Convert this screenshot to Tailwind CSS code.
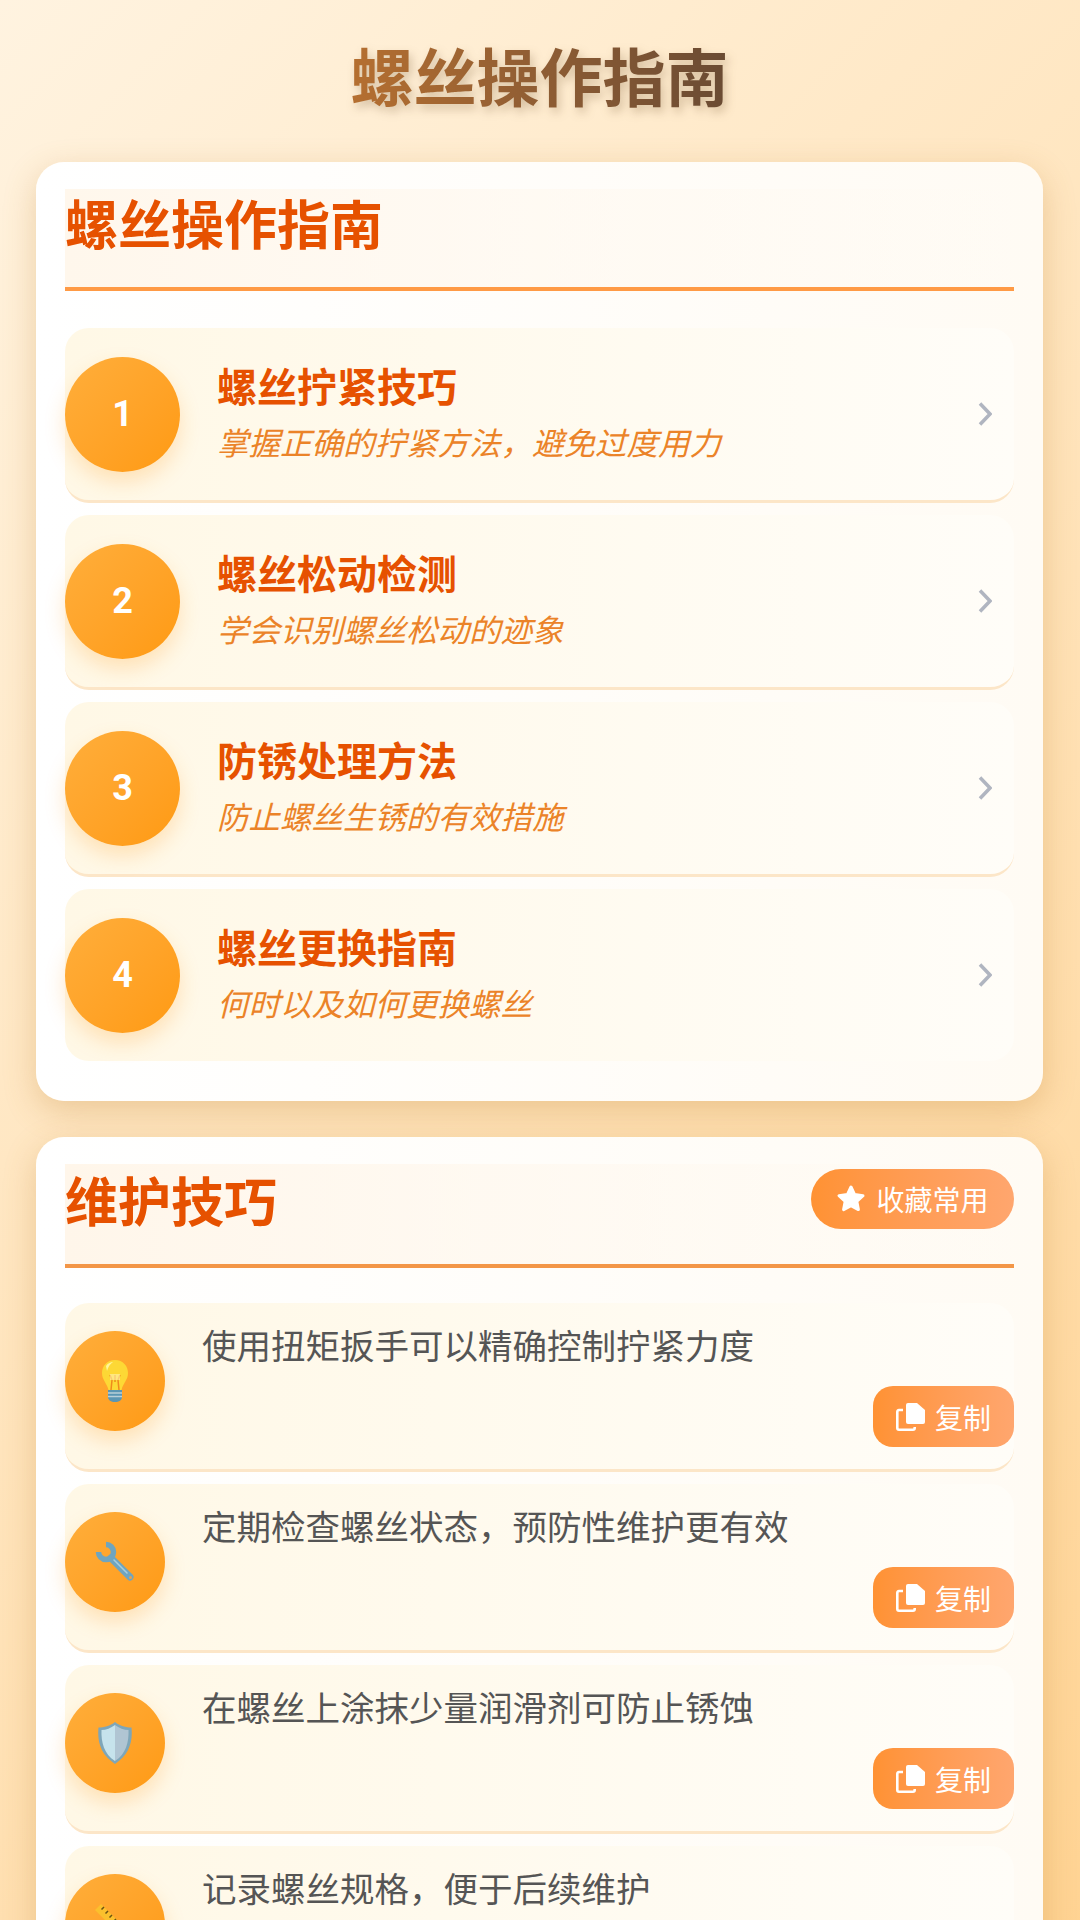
<!DOCTYPE html>
<html lang="zh-CN">
<head>
  <meta charset="UTF-8" />
  <meta name="viewport" content="width=device-width, initial-scale=1" />
  <title>螺丝操作指南</title>
  <script src="https://cdn.jsdelivr.net/npm/@tailwindcss/browser@4"></script>
</head>
<body class="font-['Noto_Sans_CJK_SC','Noto_Sans',sans-serif]">
  <div class="h-[1920px] overflow-hidden">
  <div class="h-[2600px] bg-linear-135 from-[#fff3e0] via-[#ffe0b2] to-[#ffcc80] pr-[37px] pl-[36px]">
    <h1 class="pt-[31px] pb-[45px] text-center text-[63px] leading-[86px] font-bold">
      <span class="bg-linear-to-r from-[#b56f30] to-[#6a4b33] bg-clip-text text-transparent drop-shadow-[3px_5px_5px_rgba(90,60,20,0.25)]">螺丝操作指南</span>
    </h1>

    <!-- 操作指南 -->
    <section class="mb-[36px] rounded-[28px] bg-linear-to-r from-white to-[#fffbf4] px-[29px] pt-[27px] pb-[25px] shadow-[0_10px_32px_rgba(190,130,50,0.3)]">
      <div class="mb-[37px] flex h-[102px] items-start border-b-[4px] border-[#ff9a45] bg-linear-to-r from-[#fff7ec] to-transparent">
        <h2 class="-mt-[3px] text-[53px] leading-[72px] font-bold text-[#e65100]">螺丝操作指南</h2>
      </div>

      <div class="mb-[12px] flex h-[175px] items-center rounded-[24px] border-b-[3px] border-[#fce6c8] bg-linear-to-r from-[#fff8e6] to-[#fffdf8]">
        <div class="flex h-[115px] w-[115px] shrink-0 items-center justify-center rounded-full bg-linear-135 from-[#ffae3a] to-[#ff9a10] font-['Roboto',sans-serif] text-[36px] font-bold text-white shadow-[0_10px_20px_rgba(255,160,40,0.25)]">1</div>
        <div class="ml-[37px] flex-1 pb-[8px]">
          <div class="mb-[5px] text-[40px] leading-[56px] font-bold text-[#e65100]">螺丝拧紧技巧</div>
          <div class="text-[31.5px] leading-[46px] text-[#eb8328] italic">掌握正确的拧紧方法，避免过度用力</div>
        </div>
        <svg class="mr-[22px]" width="14" height="24" viewBox="0 0 14 24" fill="none" stroke="#b0b5c0" stroke-width="3.500"><path d="M2 1.500 12 12 2 22.500" /></svg>
      </div>

      <div class="mb-[12px] flex h-[175px] items-center rounded-[24px] border-b-[3px] border-[#fce6c8] bg-linear-to-r from-[#fff8e6] to-[#fffdf8]">
        <div class="flex h-[115px] w-[115px] shrink-0 items-center justify-center rounded-full bg-linear-135 from-[#ffae3a] to-[#ff9a10] font-['Roboto',sans-serif] text-[36px] font-bold text-white shadow-[0_10px_20px_rgba(255,160,40,0.25)]">2</div>
        <div class="ml-[37px] flex-1 pb-[8px]">
          <div class="mb-[5px] text-[40px] leading-[56px] font-bold text-[#e65100]">螺丝松动检测</div>
          <div class="text-[31.5px] leading-[46px] text-[#eb8328] italic">学会识别螺丝松动的迹象</div>
        </div>
        <svg class="mr-[22px]" width="14" height="24" viewBox="0 0 14 24" fill="none" stroke="#b0b5c0" stroke-width="3.500"><path d="M2 1.500 12 12 2 22.500" /></svg>
      </div>

      <div class="mb-[12px] flex h-[175px] items-center rounded-[24px] border-b-[3px] border-[#fce6c8] bg-linear-to-r from-[#fff8e6] to-[#fffdf8]">
        <div class="flex h-[115px] w-[115px] shrink-0 items-center justify-center rounded-full bg-linear-135 from-[#ffae3a] to-[#ff9a10] font-['Roboto',sans-serif] text-[36px] font-bold text-white shadow-[0_10px_20px_rgba(255,160,40,0.25)]">3</div>
        <div class="ml-[37px] flex-1 pb-[8px]">
          <div class="mb-[5px] text-[40px] leading-[56px] font-bold text-[#e65100]">防锈处理方法</div>
          <div class="text-[31.5px] leading-[46px] text-[#eb8328] italic">防止螺丝生锈的有效措施</div>
        </div>
        <svg class="mr-[22px]" width="14" height="24" viewBox="0 0 14 24" fill="none" stroke="#b0b5c0" stroke-width="3.500"><path d="M2 1.500 12 12 2 22.500" /></svg>
      </div>

      <div class="mb-[15px] flex h-[172px] items-center rounded-[24px] bg-linear-to-r from-[#fff8e6] to-[#fffdf8]">
        <div class="flex h-[115px] w-[115px] shrink-0 items-center justify-center rounded-full bg-linear-135 from-[#ffae3a] to-[#ff9a10] font-['Roboto',sans-serif] text-[36px] font-bold text-white shadow-[0_10px_20px_rgba(255,160,40,0.25)]">4</div>
        <div class="ml-[37px] flex-1 pb-[8px]">
          <div class="mb-[5px] text-[40px] leading-[56px] font-bold text-[#e65100]">螺丝更换指南</div>
          <div class="text-[31.5px] leading-[46px] text-[#eb8328] italic">何时以及如何更换螺丝</div>
        </div>
        <svg class="mr-[22px]" width="14" height="24" viewBox="0 0 14 24" fill="none" stroke="#b0b5c0" stroke-width="3.500"><path d="M2 1.500 12 12 2 22.500" /></svg>
      </div>
    </section>

    <!-- 维护技巧 -->
    <section class="rounded-[28px] bg-linear-to-r from-white to-[#fffbf4] px-[29px] pt-[27px] pb-[25px] shadow-[0_10px_32px_rgba(190,130,50,0.3)]">
      <div class="mb-[35px] flex h-[104px] items-start justify-between border-b-[4px] border-[#f39647] bg-linear-to-r from-[#fff6ea] to-transparent">
        <h2 class="-mt-[1px] text-[53px] leading-[72px] font-bold text-[#e65100]">维护技巧</h2>
        <button class="mt-[5px] flex h-[60px] w-[203px] items-center justify-center gap-[10px] rounded-full bg-linear-to-r from-[#ff9233] to-[#ffa66e] text-[28px] text-white">
          <svg width="30" height="30" viewBox="0 0 30 30" fill="#fff" stroke="#fff" stroke-width="3" stroke-linejoin="round"><path d="M15 3 18.600 10.600 27 11.700 20.800 17.400 22.400 25.600 15 21.600 7.600 25.600 9.200 17.400 3 11.700 11.400 10.600Z" /></svg>
          收藏常用
        </button>
      </div>

      <div class="mb-[12px] flex h-[169px] rounded-[24px] border-b-[3px] border-[#fce6c8] bg-linear-to-r from-[#fff8e6] to-[#fffdf8]">
        <div class="mt-[28px] flex h-[100px] w-[100px] shrink-0 items-center justify-center rounded-full bg-linear-135 from-[#ffae3a] to-[#ff9a12] shadow-[0_10px_20px_rgba(255,160,40,0.25)]">
          <svg width="26" height="42" viewBox="0 0 26 42">
            <path d="M13 0C5 0 0 6 0 13 0 20 5 23 6.500 30H19.500C21 23 26 20 26 13 26 6 21 0 13 0Z" fill="#fdd835" />
            <path d="M4 6C6 3 9 2 11 2 8 4 6 7 5 11Z" fill="#fff59d" />
            <path d="M9 30 10 20M17 30 16 20M10 20 8 15M16 20 18 15M13 22V15" fill="none" stroke="#ef8a1c" stroke-width="1.500" />
            <path d="M8 14H18V20H8Z" fill="#fff3b0" opacity="0.6" />
            <path d="M6 30H20V37C20 40 17 42 13 42 9 42 6 40 6 37Z" fill="#5b96b4" />
            <path d="M6 33H20M6 36.500H20" stroke="#b9cfd8" stroke-width="1.300" />
          </svg>
        </div>
        <div class="ml-[37px] flex-1 pt-[16px]">
          <p class="text-[34.5px] leading-[50px] text-[#555]">使用扭矩扳手可以精确控制拧紧力度</p>
          <div class="mt-[17px] flex justify-end">
            <button class="flex h-[61px] w-[141px] items-center justify-center gap-[10px] rounded-[20px] bg-linear-to-r from-[#ff9233] to-[#ffa66e] text-[28px] text-white">
              <svg width="29" height="28" viewBox="0 0 29 28"><path d="M10 2Q10 0 12 0H21L29 7V19Q29 21 27 21H12Q10 21 10 19Z" fill="#fff" /><path d="M7 7H3Q1.300 7 1.300 9V25Q1.300 26.700 3 26.700H17Q18.700 26.700 18.700 25V24" fill="none" stroke="#fff" stroke-width="2.600" /></svg>
              复制
            </button>
          </div>
        </div>
      </div>

      <div class="mb-[12px] flex h-[169px] rounded-[24px] border-b-[3px] border-[#fce6c8] bg-linear-to-r from-[#fff8e6] to-[#fffdf8]">
        <div class="mt-[28px] flex h-[100px] w-[100px] shrink-0 items-center justify-center rounded-full bg-linear-135 from-[#ffae3a] to-[#ff9a12] shadow-[0_10px_20px_rgba(255,160,40,0.25)]">
          <svg width="42" height="42" viewBox="0 0 42 42" fill="none">
            <path d="M12 3.500A7.500 7.500 0 1 1 4.500 11" stroke="#6fa5bf" stroke-width="5.500" />
            <path d="M17 17 36 36" stroke="#6fa5bf" stroke-width="7" stroke-linecap="round" />
            <path d="M20 19 33 32" stroke="#a9cddc" stroke-width="1.500" stroke-linecap="round" />
            <circle cx="36.500" cy="36.500" r="1.500" fill="#e8a04a" />
          </svg>
        </div>
        <div class="ml-[37px] flex-1 pt-[16px]">
          <p class="text-[34.5px] leading-[50px] text-[#555]">定期检查螺丝状态，预防性维护更有效</p>
          <div class="mt-[17px] flex justify-end">
            <button class="flex h-[61px] w-[141px] items-center justify-center gap-[10px] rounded-[20px] bg-linear-to-r from-[#ff9233] to-[#ffa66e] text-[28px] text-white">
              <svg width="29" height="28" viewBox="0 0 29 28"><path d="M10 2Q10 0 12 0H21L29 7V19Q29 21 27 21H12Q10 21 10 19Z" fill="#fff" /><path d="M7 7H3Q1.300 7 1.300 9V25Q1.300 26.700 3 26.700H17Q18.700 26.700 18.700 25V24" fill="none" stroke="#fff" stroke-width="2.600" /></svg>
              复制
            </button>
          </div>
        </div>
      </div>

      <div class="mb-[12px] flex h-[169px] rounded-[24px] border-b-[3px] border-[#fce6c8] bg-linear-to-r from-[#fff8e6] to-[#fffdf8]">
        <div class="mt-[28px] flex h-[100px] w-[100px] shrink-0 items-center justify-center rounded-full bg-linear-135 from-[#ffae3a] to-[#ff9a12] shadow-[0_10px_20px_rgba(255,160,40,0.25)]">
          <svg width="34" height="42" viewBox="0 0 34 42">
            <path d="M17 0C22 4 28 5.500 33.500 5.500 35 20 31 33 17 42 3 33-1 20 .5 5.500 6 5.500 12 4 17 0Z" fill="#7ea6b9" />
            <path d="M17 3C13 6 8 8 3.500 8 3 20 6 32 17 39Z" fill="#c6e3ec" />
            <path d="M17 3C21 6 26 8 30.500 8 31 20 28 32 17 39Z" fill="#b0c5d3" />
          </svg>
        </div>
        <div class="ml-[37px] flex-1 pt-[16px]">
          <p class="text-[34.5px] leading-[50px] text-[#555]">在螺丝上涂抹少量润滑剂可防止锈蚀</p>
          <div class="mt-[17px] flex justify-end">
            <button class="flex h-[61px] w-[141px] items-center justify-center gap-[10px] rounded-[20px] bg-linear-to-r from-[#ff9233] to-[#ffa66e] text-[28px] text-white">
              <svg width="29" height="28" viewBox="0 0 29 28"><path d="M10 2Q10 0 12 0H21L29 7V19Q29 21 27 21H12Q10 21 10 19Z" fill="#fff" /><path d="M7 7H3Q1.300 7 1.300 9V25Q1.300 26.700 3 26.700H17Q18.700 26.700 18.700 25V24" fill="none" stroke="#fff" stroke-width="2.600" /></svg>
              复制
            </button>
          </div>
        </div>
      </div>

      <div class="flex h-[169px] rounded-[24px] border-b-[3px] border-[#fce6c8] bg-linear-to-r from-[#fff8e6] to-[#fffdf8]">
        <div class="mt-[28px] flex h-[100px] w-[100px] shrink-0 items-center justify-center rounded-full bg-linear-135 from-[#ffae3a] to-[#ff9a12] shadow-[0_10px_20px_rgba(255,160,40,0.25)]">
          <svg width="42" height="42" viewBox="0 0 42 42">
            <path d="M7 1 41 35 35 41 1 7Z" fill="#fbc02d" />
            <path d="M10 4 7.500 6.500M14 8 11.500 10.500M18 12 15.500 14.500M22 16 19.500 18.500M26 20 23.500 22.500M30 24 27.500 26.500" stroke="#6d5413" stroke-width="1.500" />
          </svg>
        </div>
        <div class="ml-[37px] flex-1 pt-[16px]">
          <p class="text-[34.5px] leading-[50px] text-[#555]">记录螺丝规格，便于后续维护</p>
        </div>
      </div>
    </section>
  </div>
  </div>
</body>
</html>
